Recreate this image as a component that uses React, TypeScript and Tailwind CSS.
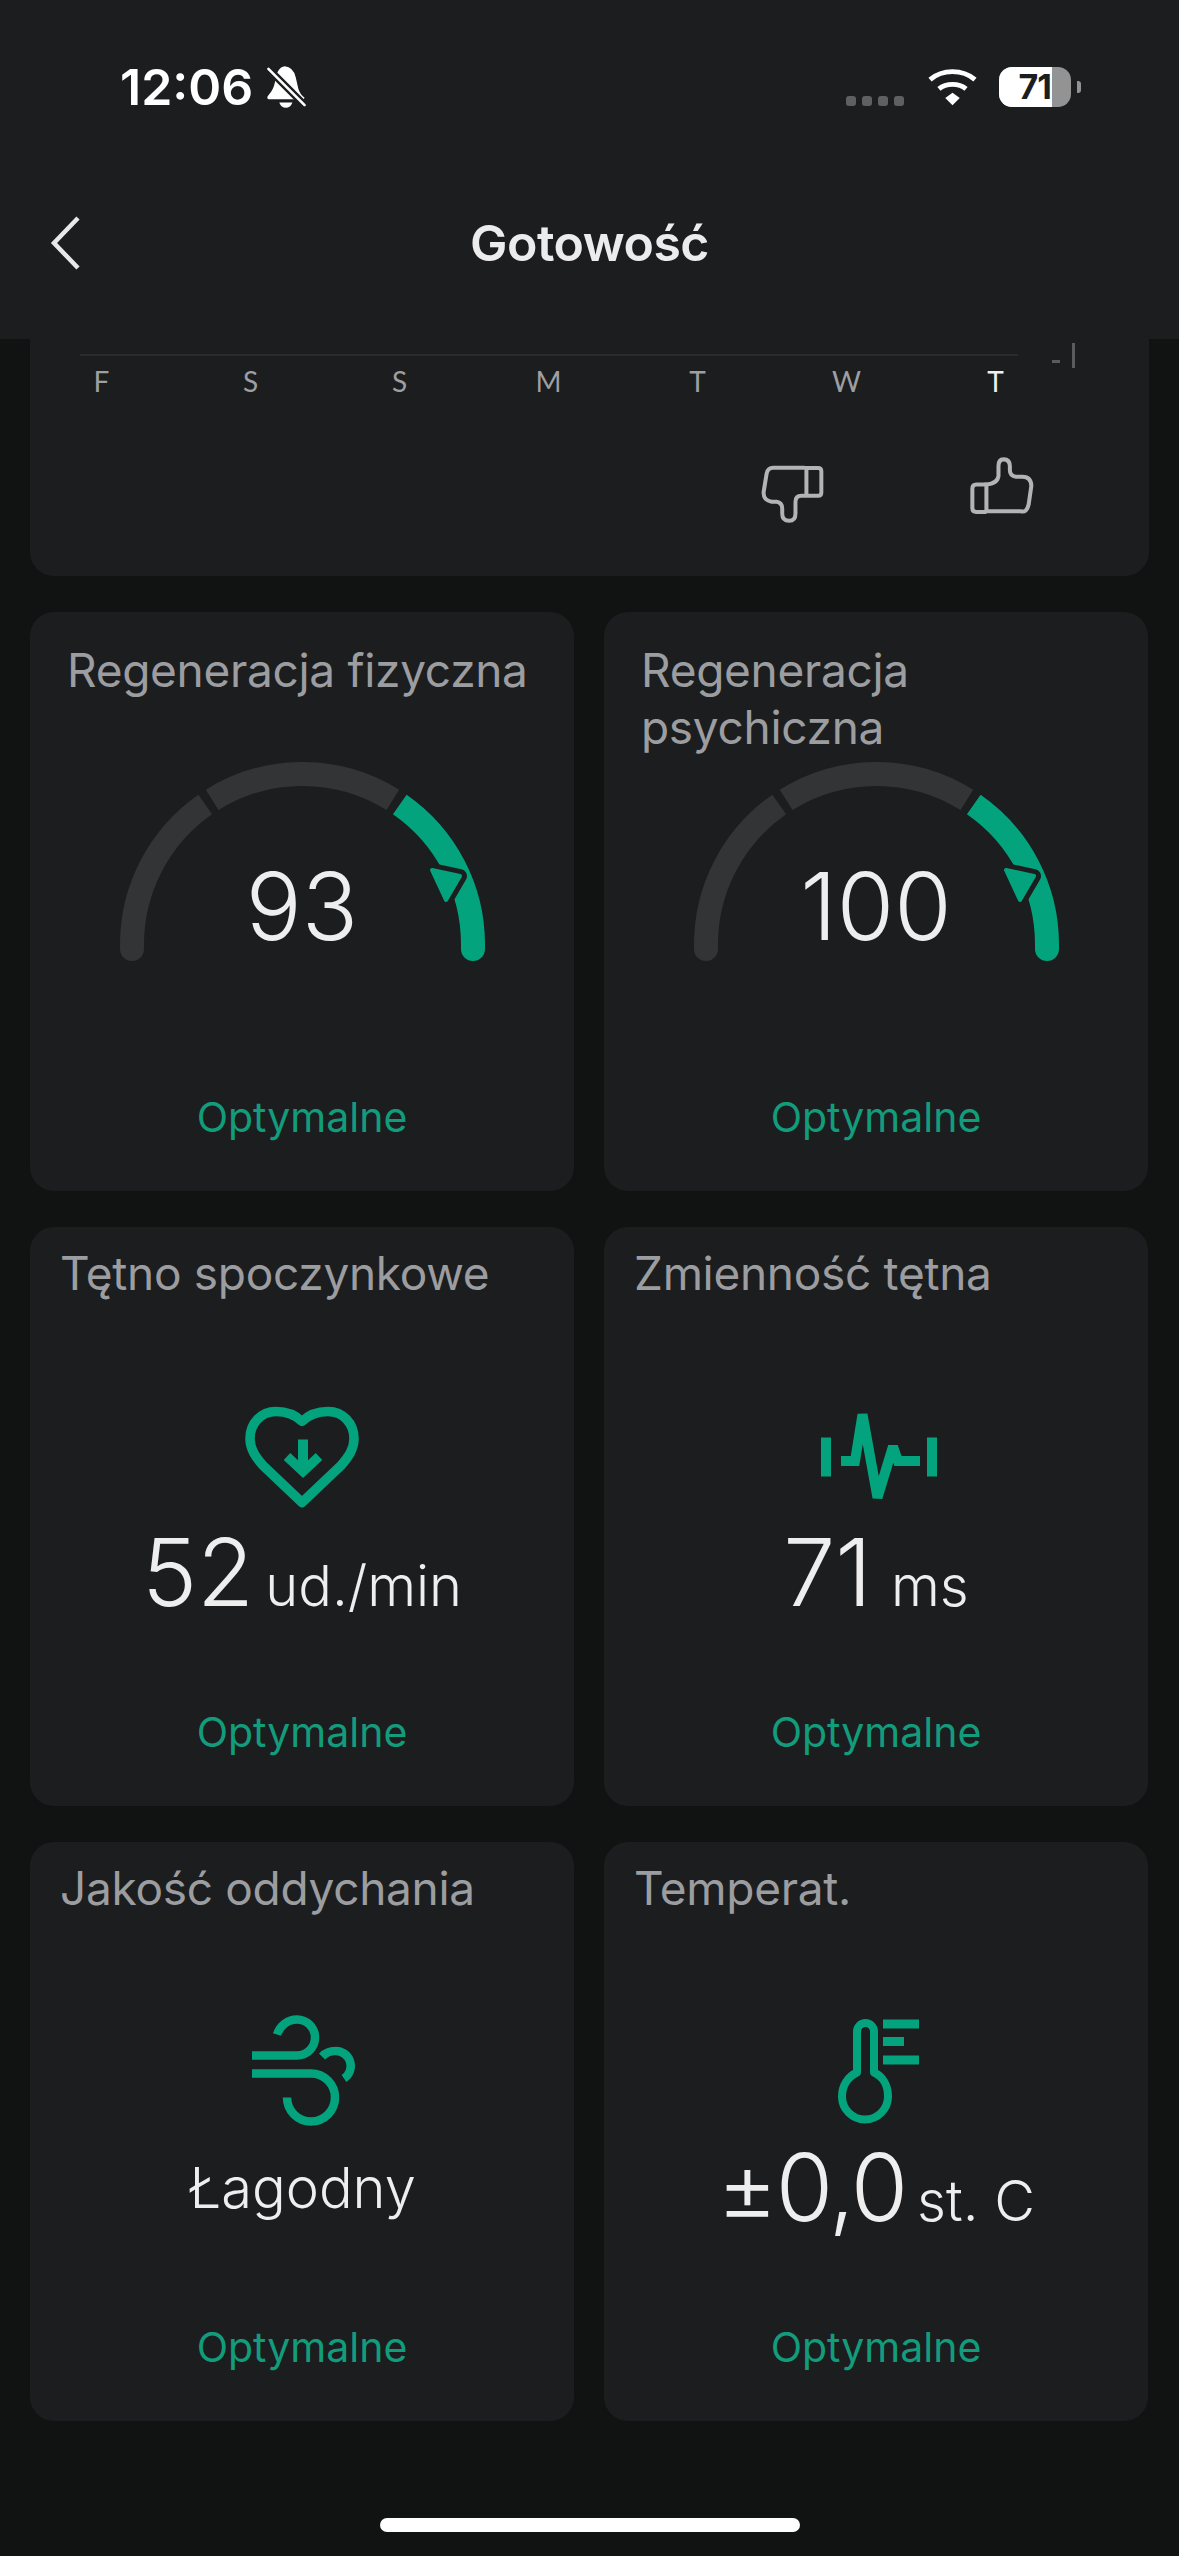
import React from "react";

const GREEN = "#03a47d";
const CARD = "#1c1d1f";

function Gauge({ value }: { value: string }) {
  return (
    <div className="relative mx-auto h-[199px] w-[365px]">
      <svg viewBox="120 762 365 199" className="h-[199px] w-[365px]" fill="none">
        <path d="M132 949V944.5A170.5 170.5 0 0 1 205.2 804.5" stroke="#333436" strokeWidth="24" />
        <circle cx="132" cy="949" r="12" fill="#333436" />
        <path d="M212.15 799.9A170.5 170.5 0 0 1 392.85 799.9" stroke="#333436" strokeWidth="24" />
        <path d="M399.8 804.5A170.5 170.5 0 0 1 473 944.5V949" stroke={GREEN} strokeWidth="24" />
        <circle cx="473" cy="949" r="12" fill={GREEN} />
        <path d="M432 870L460 876L446 900Z" fill={CARD} stroke={CARD} strokeWidth="14" strokeLinejoin="round" />
        <path d="M432 870L460 876L446 900Z" fill={GREEN} stroke={GREEN} strokeWidth="4" strokeLinejoin="round" />
      </svg>
      <div className="absolute inset-x-0 top-[94px] text-center text-[93px] leading-[100px] font-[350] text-[#eeeeef]">
        {value}
      </div>
    </div>
  );
}

function Card({
  title,
  titleClass,
  children,
}: {
  title: string;
  titleClass: string;
  children: React.ReactNode;
}) {
  return (
    <div className="flex h-[579px] flex-col rounded-[24px] bg-[#1c1d1f]">
      <div className={`text-[46px] leading-[57px] tracking-[-0.3px] text-[#9c9da0] ${titleClass}`}>{title}</div>
      <div className="flex-1">{children}</div>
      <div className="mb-[50px] text-center text-[41px] leading-[48px] text-[#129c7c]">Optymalne</div>
    </div>
  );
}

function Metric({
  icon,
  number,
  unit,
  rowClass = "mt-[-5px] gap-[11px]",
  numberClass = "",
}: {
  icon: React.ReactNode;
  number?: string;
  unit: string;
  rowClass?: string;
  numberClass?: string;
}) {
  return (
    <div className="flex flex-col items-center">
      {icon}
      <div className={`flex h-[100px] items-baseline justify-center text-[#eeeeef] ${rowClass}`}>
        {number && <span className={`text-[93px] leading-[100px] font-[350] ${numberClass}`}>{number}</span>}
        <span className="text-[56px] leading-[100px] font-[350]">{unit}</span>
      </div>
    </div>
  );
}

function HeartIcon() {
  return (
    <svg viewBox="237 1396.5 130 130" className="h-[130px] w-[130px]" fill="none" stroke={GREEN}>
      <path
        d="M302 1421C295 1414 286 1411 276 1411C261 1411 250 1423 250 1438C250 1449 256 1457 263 1465L302 1502L341 1465C348 1457 354 1449 354 1438C354 1423 343 1411 328 1411C318 1411 309 1414 302 1421Z"
        strokeWidth="9.5"
        strokeLinejoin="round"
      />
      <path d="M303 1439V1470" strokeWidth="10" />
      <path d="M287 1456L303 1471L319 1456" strokeWidth="9.5" />
    </svg>
  );
}

function PulseIcon() {
  return (
    <svg viewBox="811 1396.5 130 130" className="h-[130px] w-[130px]" fill="none" stroke={GREEN} strokeWidth="10">
      <path d="M826 1437V1476M932 1437V1476" />
      <path d="M841 1460.6H855L862.5 1414L877.5 1497L893 1446L898 1460.6H920" strokeLinejoin="miter" strokeMiterlimit="1.5" />
    </svg>
  );
}

function WindIcon() {
  return (
    <svg viewBox="237 2012.5 130 130" className="h-[130px] w-[130px]" fill="none" stroke={GREEN} strokeWidth="8.5">
      <path d="M252 2056H297A18 18 0 0 0 297 2020C288 2020 280 2026 277 2035" />
      <path d="M252 2074H311A24 24 0 1 1 287 2098" />
      <path d="M322 2057C326 2053 330 2051.5 335 2051.5A15 15 0 0 1 344 2079" />
    </svg>
  );
}

function ThermoIcon() {
  return (
    <svg viewBox="811 2012.5 130 130" className="h-[130px] w-[130px]" fill="none" stroke={GREEN}>
      <path
        d="M857 2073V2032A8.5 8.5 0 0 1 874 2032V2073C883 2077 888 2086 888 2097A23 23 0 0 1 842 2097C842 2086 848 2077 857 2073Z"
        strokeWidth="8"
        strokeLinejoin="round"
      />
      <path d="M883 2024.5H919M883 2042H904M883 2060.5H919" strokeWidth="9" />
    </svg>
  );
}

function BellOff() {
  return (
    <svg viewBox="495 75 130 140" className="ml-[12px] h-[46px] w-[43px]">
      <path d="M555 82Q580 84 588 115L596 150Q600 165 615 178L612 182H505Q498 178 505 170Q520 155 525 130Q530 85 555 82Z" fill="#fff" />
      <path d="M538 192H578Q572 208 558 208Q544 208 538 192Z" fill="#fff" />
      <path d="M505 90L615 200" stroke={CARD} strokeWidth="22" />
      <path d="M505 90L615 200" stroke="#fff" strokeWidth="8" strokeLinecap="round" />
    </svg>
  );
}

function Wifi() {
  return (
    <svg viewBox="315 85 160 115" className="h-[38px] w-[53px]" fill="none" stroke="#fff" strokeWidth="15">
      <path d="M327 120C365 88 425 88 463 120" />
      <path d="M354 148C376 130 414 130 436 148" />
      <path d="M373 176L395 160L417 176L395 198Z" fill="#fff" stroke="none" />
    </svg>
  );
}

function ThumbDown() {
  return (
    <svg viewBox="60 95 200 190" className="h-[63px] w-[67px]" fill="none" stroke="#b4b4b5" strokeWidth="12">
      <path d="M200 112H105Q88 112 85 130L76 185Q74 210 100 215H115Q132 218 132 235V250Q132 272 153 272Q172 272 172 250V215Q172 197 190 197H240Q250 197 250 187V123Q250 113 240 113H200" />
      <path d="M205 113V195" />
    </svg>
  );
}

function ThumbUp() {
  return (
    <svg viewBox="690 80 200 182" className="h-[61px] w-[67px]" fill="none" stroke="#b4b4b5" strokeWidth="12">
      <path d="M742 165H712Q700 165 700 177V235Q700 247 712 247H742" />
      <path d="M742 165V245H845Q862 250 868 225L876 170Q876 143 850 142H830Q812 140 812 122V110Q812 90 793 90Q778 90 778 110V140Q775 163 742 165Z" />
    </svg>
  );
}

export default function App() {
  const days = ["F", "S", "S", "M", "T", "W", "T"];

  return (
    <div className="h-[2556px] w-[1179px] overflow-hidden bg-[#111212] font-['Inter',sans-serif]">
      {/* Header */}
      <header className="h-[339px] bg-[#1c1d1f] pt-[60px]">
        <div className="flex h-[54px] items-center justify-between pr-[98px] pl-[120px]">
          <div className="flex items-center">
            <span className="text-[50px] leading-[54px] font-semibold text-white">12:06</span>
            <BellOff />
          </div>
          <div className="flex items-center">
            <div className="mt-[28px] flex gap-[6px]">
              <span className="h-[10px] w-[10px] rounded-[3px] bg-[#5f6062]" />
              <span className="h-[10px] w-[10px] rounded-[3px] bg-[#5f6062]" />
              <span className="h-[10px] w-[10px] rounded-[3px] bg-[#5f6062]" />
              <span className="h-[10px] w-[10px] rounded-[3px] bg-[#5f6062]" />
            </div>
            <div className="mr-[20px] ml-[22px]">
              <Wifi />
            </div>
            <div className="flex h-[40px] w-[72px] overflow-hidden rounded-[13px] bg-[#939393]">
              <div className="h-[40px] w-[53px] bg-white pr-[1px] text-right text-[34px] leading-[40px] font-bold tracking-[-1px] text-[#1c1d1f]">
                71
              </div>
            </div>
            <div className="ml-[6px] h-[12px] w-[4px] rounded-r-[3px] bg-[#939393]" />
          </div>
        </div>
        <nav className="mt-[99px] grid h-[60px] grid-cols-[1fr_auto_1fr] items-center">
          <svg viewBox="0 0 32 54" className="ml-[50px] h-[54px] w-[32px]" fill="none" stroke="#e8e8e8" strokeWidth="4.5">
            <path d="M28 2L4 27L28 52" />
          </svg>
          <h1 className="text-[50px] leading-[60px] font-semibold tracking-[-0.5px] text-[#ececed]">Gotowość</h1>
          <div />
        </nav>
      </header>

      <main className="px-[30px]">
        {/* Chart remainder */}
        <section className="h-[237px] rounded-b-[24px] bg-[#1c1d1f] pt-[4px]">
          <div className="flex h-[25px] items-start">
            <div className="mt-[11px] ml-[50px] h-[2px] w-[938px] bg-[#2a2b2e]" />
            <div className="mt-[17px] ml-[34px] h-[3px] w-[8px] bg-[#5a5b5d]" />
            <div className="ml-[12px] h-[25px] w-[3px] bg-[#5a5b5d]" />
          </div>
          <div className="mt-[-3px] ml-[-3px] grid w-[1043px] grid-cols-7 font-['Lato',sans-serif] text-[28px] leading-[32px] text-[#9e9fa1]">
            {days.map((d, i) => (
              <span key={i} className={i === 6 ? "text-center text-[#f0f0f0]" : "text-center"}>
                {d}
              </span>
            ))}
          </div>
          <div className="flex items-start">
            <div className="mt-[65px] ml-[728px]">
              <ThumbDown />
            </div>
            <div className="mt-[59px] ml-[144px]">
              <ThumbUp />
            </div>
          </div>
        </section>

        <div className="mt-[36px] grid grid-cols-[544px_544px] gap-x-[30px] gap-y-[36px]">
          <Card title="Regeneracja fizyczna" titleClass="h-[150px] pt-[30px] pl-[37px]">
            <Gauge value="93" />
          </Card>
          <Card title="Regeneracja psychiczna" titleClass="h-[150px] w-[400px] pt-[30px] pl-[37px]">
            <Gauge value="100" />
          </Card>
          <Card title="Tętno spoczynkowe" titleClass="h-[170px] pt-[18px] pl-[30px]">
            <Metric icon={<HeartIcon />} number="52" unit="ud./min" />
          </Card>
          <Card title="Zmienność tętna" titleClass="h-[170px] pt-[18px] pl-[30px]">
            <Metric icon={<PulseIcon />} number="71" unit="ms" rowClass="mt-[-5px] gap-[19px]" />
          </Card>
          <Card title="Jakość oddychania" titleClass="h-[170px] pt-[18px] pl-[30px]">
            <Metric icon={<WindIcon />} unit="Łagodny" rowClass="mt-[-4px]" />
          </Card>
          <Card title="Temperat." titleClass="h-[170px] pt-[18px] pl-[30px]">
            <Metric icon={<ThermoIcon />} number="±0,0" unit="st. C" numberClass="tracking-[-2px]" />
          </Card>
        </div>

        <div className="mx-auto mt-[97px] h-[14px] w-[420px] rounded-full bg-white" />
      </main>
    </div>
  );
}
